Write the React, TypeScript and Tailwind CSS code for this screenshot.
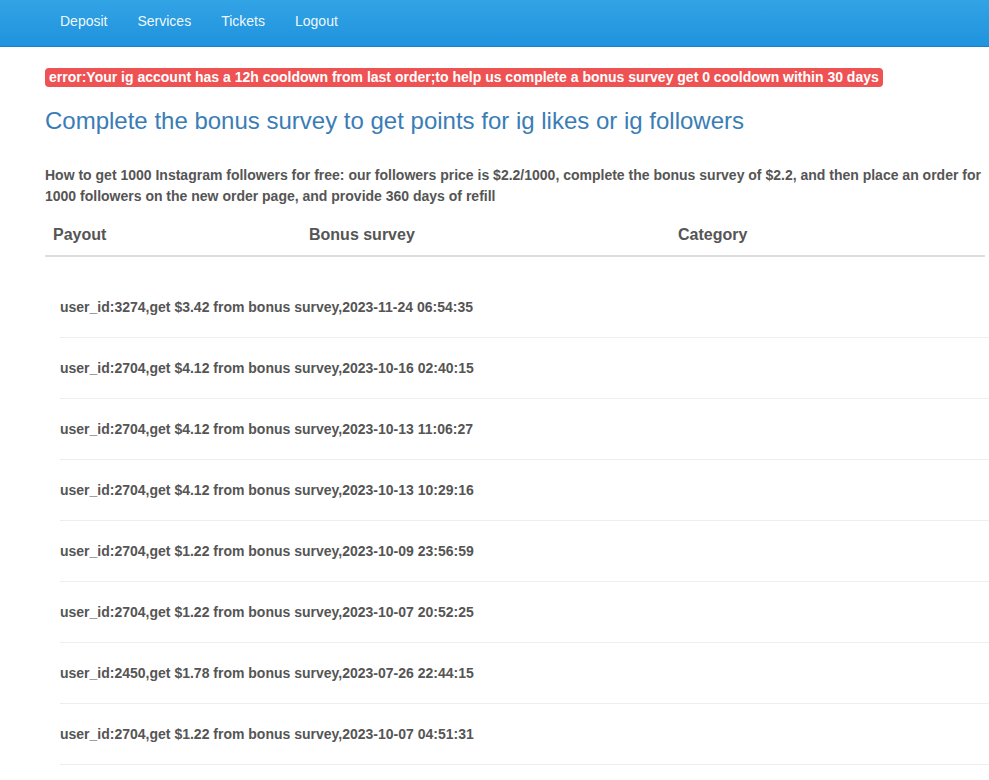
const NAV = ['Deposit', 'Services', 'Tickets', 'Logout'];

const ROWS = [
  'user_id:3274,get $3.42 from bonus survey,2023-11-24 06:54:35',
  'user_id:2704,get $4.12 from bonus survey,2023-10-16 02:40:15',
  'user_id:2704,get $4.12 from bonus survey,2023-10-13 11:06:27',
  'user_id:2704,get $4.12 from bonus survey,2023-10-13 10:29:16',
  'user_id:2704,get $1.22 from bonus survey,2023-10-09 23:56:59',
  'user_id:2704,get $1.22 from bonus survey,2023-10-07 20:52:25',
  'user_id:2450,get $1.78 from bonus survey,2023-07-26 22:44:15',
  'user_id:2704,get $1.22 from bonus survey,2023-10-07 04:51:31',
];

export default function App() {
  return (
    <div className="min-h-screen bg-white overflow-hidden font-['Liberation_Sans',Arial,sans-serif] text-[#555]">
      {/* Navbar */}
      <nav className="h-[47px] bg-gradient-to-b from-[#32a3e4] to-[#1f93de] border-b border-[#1b80c6] flex items-center pl-[45px]">
        {NAV.map(n => (
          <a key={n} href="#" className="px-[15px] text-[14px] text-white/95 leading-[20px] -mt-[4px]">
            {n}
          </a>
        ))}
      </nav>

      <div className="pl-[45px] pr-[4px]">
        {/* Error label */}
        <div className="flex mt-[21px]">
          <span className="rounded-[4px] bg-[#ee5253] text-white font-bold text-[14px] leading-[19px] px-[4px]">
            error:Your ig account has a 12h cooldown from last order;to help us complete a bonus survey get 0 cooldown within 30 days
          </span>
        </div>

        <h3 className="mt-[20px] text-[24px] leading-[28px] text-[#3a7db6]">
          Complete the bonus survey to get points for ig likes or ig followers
        </h3>

        <p className="mt-[30px] text-[14px] leading-[21px] font-bold text-[#555]">
          How to get 1000 Instagram followers for free: our followers price is $2.2/1000, complete the bonus survey of $2.2, and then place an order for 1000 followers on the new order page, and provide 360 days of refill
        </p>

        {/* Table header */}
        <div className="mt-[13px] grid grid-cols-[256px_369px_1fr] border-b-2 border-[#ddd] text-[16px] font-bold leading-[22px] text-[#555]">
          <div className="px-[8px] pt-[4px] pb-[9px]">Payout</div>
          <div className="px-[8px] pt-[4px] pb-[9px]">Bonus survey</div>
          <div className="px-[8px] pt-[4px] pb-[9px]">Category</div>
        </div>

        {/* Payout rows */}
        <div className="ml-[15px] -mr-[20px] mt-[20px]">
          {ROWS.map((r, i) => (
            <div key={i} className="h-[61px] flex items-center border-b border-[#eee] text-[14px] font-bold text-[#555]">
              {r}
            </div>
          ))}
        </div>
      </div>
    </div>
  );
}
